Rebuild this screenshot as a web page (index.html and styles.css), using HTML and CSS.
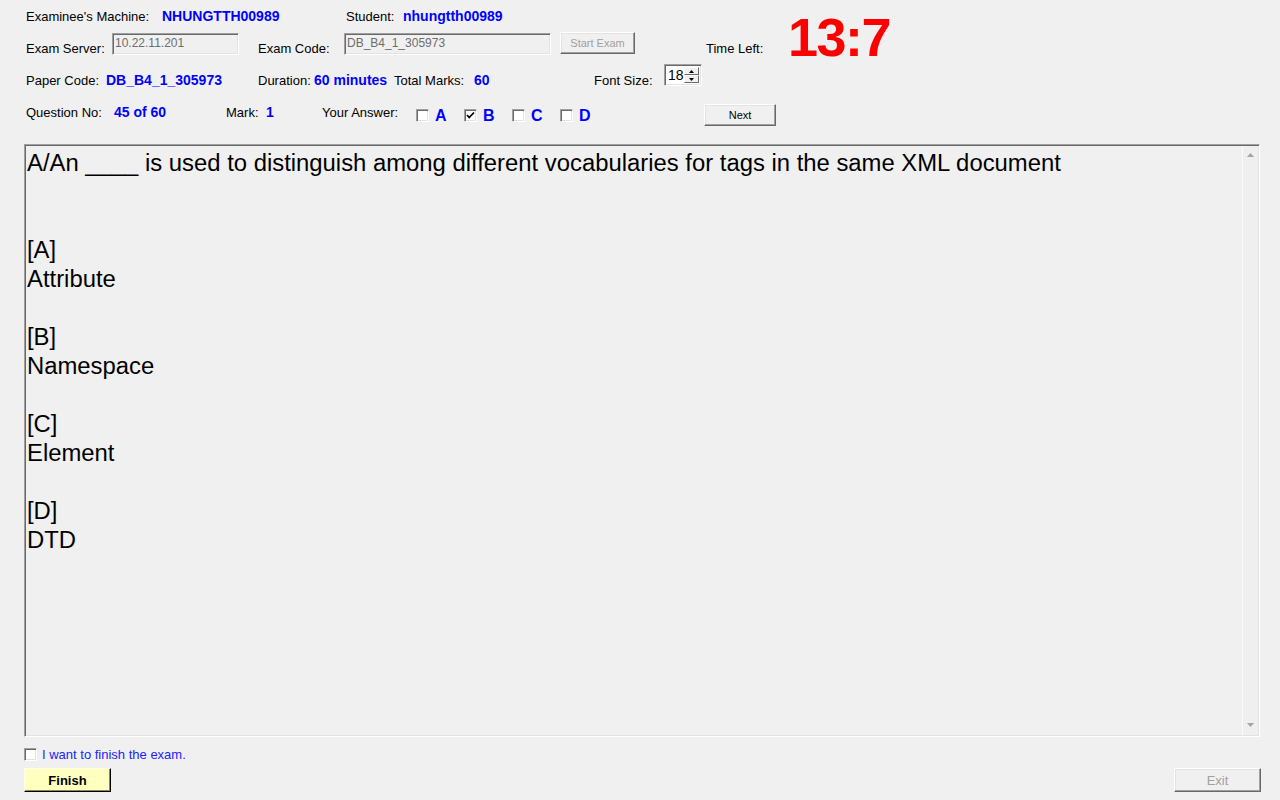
FILE: index.html
```html
<!DOCTYPE html>
<html lang="en">
<head>
<meta charset="utf-8">
<title>Exam Client</title>
<link rel="stylesheet" href="styles.css">
</head>
<body>
<div class="app">
  <div class="row r1">
    <span class="lbl">Examinee's Machine:</span>
    <span class="val">NHUNGTTH00989</span>
    <span class="lbl">Student:</span>
    <span class="val">nhungtth00989</span>
  </div>

  <div class="row r2">
    <span class="lbl">Exam Server:</span>
    <span class="cell"><span class="textbox tb-server">10.22.11.201</span></span>
    <span class="lbl">Exam Code:</span>
    <span class="cell"><span class="textbox tb-code">DB_B4_1_305973</span></span>
    <span class="cell"><span class="btn btn-start">Start Exam</span></span>
    <span class="lbl">Time Left:</span>
    <span class="timer">13:7</span>
  </div>

  <div class="row r3">
    <span class="lbl">Paper Code:</span>
    <span class="val">DB_B4_1_305973</span>
    <span class="lbl">Duration:</span>
    <span class="val">60 minutes</span>
    <span class="lbl">Total Marks:</span>
    <span class="val">60</span>
    <span class="lbl">Font Size:</span>
    <span class="spinner">
      <span class="spin-val">18</span>
      <span class="spin-btns">
        <span class="spin-btn"><svg width="5" height="3" viewBox="0 0 5 3"><path d="M2.5 0 L5 3 L0 3 Z" fill="#000"/></svg></span>
        <span class="spin-btn"><svg width="5" height="3" viewBox="0 0 5 3"><path d="M0 0 L5 0 L2.5 3 Z" fill="#000"/></svg></span>
      </span>
    </span>
  </div>

  <div class="row r4">
    <span class="lbl">Question No:</span>
    <span class="val">45 of 60</span>
    <span class="lbl">Mark:</span>
    <span class="val">1</span>
    <span class="lbl">Your Answer:</span>
    <span class="opt"><span class="cb"></span><span class="opt-letter">A</span></span>
    <span class="opt"><span class="cb"><svg width="11" height="11" viewBox="0 0 11 11"><polyline points="2,5 4.2,7.5 9,2.5" fill="none" stroke="#000" stroke-width="1.8"/></svg></span><span class="opt-letter">B</span></span>
    <span class="opt"><span class="cb"></span><span class="opt-letter">C</span></span>
    <span class="opt"><span class="cb"></span><span class="opt-letter">D</span></span>
    <span class="cell"><span class="btn btn-next">Next</span></span>
  </div>

  <div class="question-box">
    <div class="question-text">
      <p>A/An ____ is used to distinguish among different vocabularies for tags in the same XML document</p>
      <p>&nbsp;</p>
      <p>&nbsp;</p>
      <p>[A]</p>
      <p>Attribute</p>
      <p>&nbsp;</p>
      <p>[B]</p>
      <p>Namespace</p>
      <p>&nbsp;</p>
      <p>[C]</p>
      <p>Element</p>
      <p>&nbsp;</p>
      <p>[D]</p>
      <p>DTD</p>
    </div>
    <div class="scrollbar">
      <svg class="arrow" width="7" height="4" viewBox="0 0 7 4"><path d="M3.5 0 L7 4 L0 4 Z" fill="#a3a3a3"/></svg>
      <svg class="arrow" width="7" height="4" viewBox="0 0 7 4"><path d="M0 0 L7 0 L3.5 4 Z" fill="#a3a3a3"/></svg>
    </div>
  </div>

  <div class="finish-check">
    <span class="cb"></span>
    <span class="finish-label">I want to finish the exam.</span>
  </div>

  <div class="bottom-buttons">
    <span class="btn btn-finish">Finish</span>
    <span class="btn btn-exit">Exit</span>
  </div>
</div>
</body>
</html>
```

FILE: styles.css
```css
* { box-sizing: border-box; }

html, body {
  margin: 0;
  padding: 0;
  background: #f0f0f0;
  width: 1280px;
  height: 800px;
  overflow: hidden;
}

body {
  font-family: "Liberation Sans", Arial, sans-serif;
  color: #000;
}

.app {
  width: 1280px;
  height: 800px;
}

.row {
  display: grid;
  align-items: start;
  padding-left: 26px;
}

.r1 { grid-template-columns: 136px 184px 57px 1fr; height: 32px; }
.r2 { grid-template-columns: 86px 146px 86px 216px 146px 82px 1fr; height: 28px; }
.r3 { grid-template-columns: 80px 152px 56px 80px 80px 120px 70px 1fr; height: 32px; }
.r4 { grid-template-columns: 88px 112px 40px 56px 94px 48px 48px 48px 144px 1fr; height: 40px; }

.lbl {
  font-size: 13px;
  line-height: 15px;
  margin-top: 9px;
  white-space: nowrap;
}

.val {
  font-size: 14px;
  line-height: 16px;
  font-weight: bold;
  color: #0000ff;
  margin-top: 8px;
  white-space: nowrap;
}

.r3 .lbl, .r4 .lbl { margin-top: 13px; }
.r3 .val, .r4 .val { margin-top: 12px; }

.cell { display: block; }

.textbox {
  display: block;
  height: 22px;
  margin-top: 1px;
  font-size: 12px;
  line-height: 18px;
  color: #6d6d6d;
  padding-left: 2px;
  background: #f0f0f0;
  border: 1px solid;
  border-color: #a0a0a0 #ffffff #ffffff #a0a0a0;
  box-shadow: inset 1px 1px 0 #696969, inset -1px -1px 0 #e3e3e3;
  white-space: nowrap;
}
.tb-server { width: 127px; }
.tb-code { width: 207px; }

.btn {
  display: flex;
  align-items: center;
  justify-content: center;
  height: 22px;
  font-size: 11px;
  background: #f0f0f0;
  border: 1px solid;
  border-color: #ffffff #696969 #696969 #ffffff;
  box-shadow: inset -1px -1px 0 #a0a0a0, inset 1px 1px 0 #e3e3e3;
  white-space: nowrap;
}
.btn-start {
  width: 75px;
  color: #a0a0a0;
}
.btn-next {
  width: 72px;
  margin-top: 12px;
}

.timer {
  font-size: 54px;
  line-height: 54px;
  font-weight: bold;
  letter-spacing: -1.5px;
  color: #ff0000;
  margin-top: -22px;
  white-space: nowrap;
}

.spinner {
  display: flex;
  width: 38px;
  height: 22px;
  margin-top: 4px;
  background: #ffffff;
  border: 1px solid;
  border-color: #a0a0a0 #ffffff #ffffff #a0a0a0;
  box-shadow: inset 1px 1px 0 #696969, inset -1px -1px 0 #e3e3e3;
  padding: 2px 2px 2px 3px;
}
.spin-val {
  flex: 1;
  font-size: 14px;
  line-height: 17px;
}
.spin-btns {
  display: flex;
  flex-direction: column;
  width: 15px;
}
.spin-btn {
  flex: 1;
  display: flex;
  align-items: center;
  justify-content: center;
  background: #f0f0f0;
  border: 1px solid;
  border-color: #ffffff #696969 #696969 #ffffff;
}
.spin-btn svg { display: block; }

.opt {
  display: flex;
  align-items: center;
  gap: 6px;
  height: 18px;
  margin-top: 14px;
}

.cb {
  display: flex;
  align-items: center;
  justify-content: center;
  width: 13px;
  height: 13px;
  background: #ffffff;
  border: 1px solid;
  border-color: #a0a0a0 #ffffff #ffffff #a0a0a0;
  box-shadow: inset 1px 1px 0 #696969, inset -1px -1px 0 #e3e3e3;
}
.cb svg { display: block; }

.opt-letter {
  font-size: 16px;
  font-weight: bold;
  color: #0000ff;
  line-height: 18px;
  margin-top: 2px;
}

.question-box {
  display: flex;
  width: 1236px;
  height: 593px;
  margin: 12px 0 0 24px;
  border: 1px solid;
  border-color: #a0a0a0 #ffffff #ffffff #a0a0a0;
  box-shadow: inset 1px 1px 0 #696969, inset -1px -1px 0 #e3e3e3;
  padding: 1px 1px 1px 1px;
}

.question-text {
  flex: 1;
  padding: 2px 0 0 1px;
  font-size: 23.85px;
  line-height: 29px;
}
.question-text p {
  margin: 0;
  white-space: nowrap;
}

.scrollbar {
  width: 16px;
  display: flex;
  flex-direction: column;
  justify-content: space-between;
  align-items: center;
  padding: 7px 0 8px 0;
  background: #efefef;
  border-left: 1px solid #fafafa;
}

.finish-check {
  display: flex;
  align-items: center;
  gap: 5px;
  height: 13px;
  margin-top: 11px;
  padding-left: 24px;
}
.finish-label {
  font-size: 13px;
  line-height: 15px;
  color: #2222ff;
  white-space: nowrap;
}

.bottom-buttons {
  display: flex;
  justify-content: space-between;
  margin-top: 7px;
  padding: 0 19px 0 24px;
}
.btn-finish {
  width: 87px;
  height: 24px;
  font-size: 13px;
  font-weight: bold;
  background: #ffffc0;
  border-color: #ffffe0 #000000 #000000 #ffffe0;
  box-shadow: inset -1px -1px 0 #8a8a50;
}
.btn-exit {
  width: 87px;
  height: 24px;
  font-size: 13px;
  color: #a0a0a0;
}
```
